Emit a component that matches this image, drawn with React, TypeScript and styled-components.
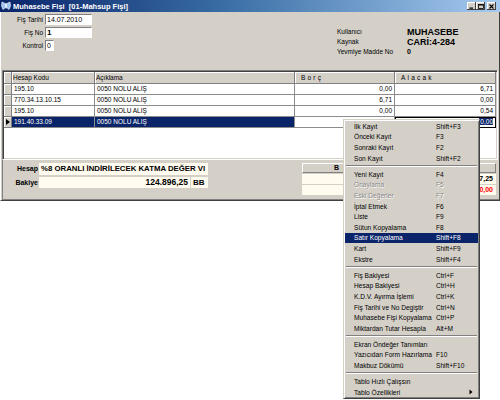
import styled, { createGlobalStyle } from "styled-components";

const GlobalStyle = createGlobalStyle`
  html, body {
    margin: 0;
    padding: 0;
    background: #fff;
  }
  body {
    width: 500px;
    height: 400px;
    overflow: hidden;
    font-family: "Liberation Sans", Arial, sans-serif;
  }
`;

const Page = styled.div`
  position: relative;
  width: 500px;
  height: 400px;
  background: #fff;
  overflow: hidden;
`;

const Window = styled.div`
  width: 500px;
  display: flex;
  flex-direction: column;
  background: #d4d0c8;
`;

const TitleBar = styled.div`
  display: flex;
  align-items: center;
  height: 12px;
  padding: 0 4px 0 1px;
  gap: 2px;
  background: linear-gradient(to right, #0a246a 0%, #3a6ea5 45%, #a6caf0 100%);
`;

const TitleText = styled.span`
  color: #fff;
  font-weight: bold;
  font-size: 7.5px;
  white-space: pre;
`;

const CaptionButtons = styled.div`
  display: flex;
  margin-left: auto;
`;

const CaptionButton = styled.div<{ $gap?: boolean }>`
  width: 9px;
  height: 8px;
  margin-left: ${({ $gap }) => ($gap ? "2px" : "0")};
  box-sizing: border-box;
  background: #d4d0c8;
  box-shadow: inset -1px -1px 0 #404040, inset 1px 1px 0 #fff;
  display: flex;
  align-items: center;
  justify-content: center;
`;

const Body = styled.div`
  display: flex;
  flex-direction: column;
  border-left: 1px solid #fff;
  border-right: 1px solid #404040;
  border-bottom: 1px solid #404040;
`;

const FormArea = styled.div`
  display: flex;
  height: 56px;
`;

const FieldGrid = styled.div`
  width: 335px;
  display: grid;
  grid-template-columns: 42px auto;
  grid-auto-rows: 13px;
  column-gap: 2px;
  align-content: start;
  padding-top: 2px;
  box-sizing: border-box;
`;

const FieldLabel = styled.span`
  font-size: 6.5px;
  text-align: right;
  line-height: 11px;
  color: #000;
`;

const TextBox = styled.div<{ $width: number; $bold?: boolean }>`
  width: ${({ $width }) => $width}px;
  height: 11px;
  box-sizing: border-box;
  background: #fff;
  border-top: 1px solid #808080;
  border-left: 1px solid #808080;
  border-bottom: 1px solid #fff;
  border-right: 1px solid #fff;
  padding-left: 1px;
  font-size: ${({ $bold }) => ($bold ? "8px" : "7px")};
  font-weight: ${({ $bold }) => ($bold ? "bold" : "normal")};
  line-height: 9px;
`;

const InfoGrid = styled.div`
  display: grid;
  grid-template-columns: 70px auto;
  grid-auto-rows: 10px;
  align-content: start;
  padding-top: 15px;
  padding-left: 1px;
`;

const InfoLabel = styled.span`
  font-size: 6.5px;
  line-height: 10px;
`;

const InfoValue = styled.span<{ $small?: boolean }>`
  font-size: ${({ $small }) => ($small ? "7px" : "9px")};
  font-weight: bold;
  line-height: 10px;
  color: #000;
`;

const GridFrame = styled.div`
  margin: 2px 1px 0 1px;
  height: 90px;
  box-sizing: border-box;
  border: 1px solid;
  border-color: #808080 #fff #fff #808080;
  box-shadow: inset 1px 1px 0 #404040, inset -1px -1px 0 #d4d0c8;
  padding: 1px;
  background: #fff;
`;

const DataGrid = styled.div`
  display: grid;
  grid-template-columns: 8px 83px 200px 100px 1fr;
  grid-template-rows: 12px;
  grid-auto-rows: 11px;
`;

const HeaderCell = styled.div<{ $spaced?: boolean }>`
  box-sizing: border-box;
  background: #d4d0c8;
  border-right: 1px solid #808080;
  border-bottom: 1px solid #808080;
  box-shadow: inset 1px 1px 0 #fff;
  font-size: 6.5px;
  line-height: 11px;
  padding-left: ${({ $spaced }) => ($spaced ? "6px" : "1px")};
  letter-spacing: ${({ $spaced }) => ($spaced ? "2.2px" : "0")};
  white-space: nowrap;
  overflow: hidden;
`;

const IndicatorCell = styled.div`
  box-sizing: border-box;
  background: #d4d0c8;
  border-right: 1px solid #808080;
  border-bottom: 1px solid #808080;
  box-shadow: inset 1px 1px 0 #fff;
  display: flex;
  align-items: center;
  justify-content: center;
`;

const Cell = styled.div<{ $right?: boolean; $selected?: boolean; $editing?: boolean }>`
  box-sizing: border-box;
  border-right: 1px solid #8c8c8c;
  border-bottom: 1px solid #8c8c8c;
  background: ${({ $selected }) => ($selected ? "#0a246a" : "#fff")};
  color: ${({ $selected }) => ($selected ? "#fff" : "#000")};
  outline: ${({ $editing }) => ($editing ? "1px solid #000" : "none")};
  outline-offset: -1px;
  font-size: 6.5px;
  line-height: 10px;
  padding: 0 ${({ $right }) => ($right ? "2px" : "0")} 0 ${({ $right }) => ($right ? "0" : "2px")};
  text-align: ${({ $right }) => ($right ? "right" : "left")};
  white-space: nowrap;
  overflow: hidden;
`;

const SelectedText = styled.span`
  background: #0a246a;
  color: #fff;
  padding: 0 0 0 1px;
`;

const SummaryPanel = styled.div`
  display: flex;
  height: 40px;
  margin-left: 1px;
  box-sizing: border-box;
  border-left: 1px solid #808080;
  border-bottom: 1px solid #808080;
`;

const SummaryFields = styled.div`
  display: grid;
  grid-template-columns: 35px 151px 17px;
  grid-template-rows: 12px 11px;
  column-gap: 1px;
  row-gap: 2px;
  padding-top: 3px;
  align-content: start;
`;

const SummaryLabel = styled.span`
  font-size: 7px;
  font-weight: bold;
  line-height: 12px;
  text-align: right;
`;

const CreamField = styled.div<{ $span?: boolean; $right?: boolean; $size: number }>`
  grid-column: ${({ $span }) => ($span ? "2 / 4" : "auto")};
  background: #fffbef;
  font-size: ${({ $size }) => $size}px;
  font-weight: bold;
  line-height: 11px;
  padding: 0 2px;
  text-align: ${({ $right }) => ($right ? "right" : "left")};
  white-space: nowrap;
`;

const TotalsGrid = styled.div`
  margin: 3px 3px 0 auto;
  width: 194px;
  display: grid;
  grid-template-columns: 78px 1fr;
  grid-template-rows: 10px 10px 10px;
  row-gap: 1px;
  align-content: start;
`;

const TotalsHead = styled.div`
  background: #d4d0c8;
  box-sizing: border-box;
  border: 1px solid;
  border-color: #fff #808080 #808080 #fff;
  font-size: 7px;
  font-weight: bold;
  line-height: 8px;
  padding-left: 31px;
  letter-spacing: 4px;
  white-space: nowrap;
  overflow: hidden;
`;

const TotalsCell = styled.div<{ $red?: boolean }>`
  background: #fffbef;
  color: ${({ $red }) => ($red ? "#ff0000" : "#000")};
  font-size: 7px;
  font-weight: bold;
  line-height: 10px;
  text-align: right;
  padding-right: 3px;
`;

const Menu = styled.div`
  position: absolute;
  left: 343px;
  top: 119px;
  width: 137px;
  box-sizing: border-box;
  background: #d4d0c8;
  border: 1px solid;
  border-color: #d4d0c8 #404040 #404040 #d4d0c8;
  box-shadow: inset 1px 1px 0 #fff, inset -1px -1px 0 #808080;
  padding: 1px;
`;

const MenuRow = styled.div<{ $active?: boolean; $disabled?: boolean }>`
  display: flex;
  align-items: center;
  height: 10.64px;
  padding-left: 9px;
  background: ${({ $active }) => ($active ? "#0a246a" : "transparent")};
  color: ${({ $active, $disabled }) =>
    $active ? "#fff" : $disabled ? "#8a8a8a" : "#000"};
  text-shadow: ${({ $disabled }) => ($disabled ? "0.6px 0.6px 0 #fff" : "none")};
  font-size: 6.6px;
  white-space: nowrap;
`;

const MenuLabel = styled.span`
  width: 82px;
`;

const MenuKey = styled.span`
  flex: 1;
`;

const MenuSeparator = styled.div`
  height: 0;
  margin: 1.68px 1px;
  border-top: 1px solid #808080;
  border-bottom: 1px solid #fff;
`;

type Row = { code: string; desc: string; debit: string; credit: string; current?: boolean };

const rows: Row[] = [
  { code: "195.10", desc: "0050 NOLU ALIŞ", debit: "0,00", credit: "6,71" },
  { code: "770.34.13.10.15", desc: "0050 NOLU ALIŞ", debit: "6,71", credit: "0,00" },
  { code: "195.10", desc: "0050 NOLU ALIŞ", debit: "0,00", credit: "0,54" },
  { code: "191.40.33.09", desc: "0050 NOLU ALIŞ", debit: "", credit: "0,00", current: true },
];

type MenuEntry =
  | { label: string; key?: string; disabled?: boolean; active?: boolean; sub?: boolean }
  | "sep";

const menu: MenuEntry[] = [
  { label: "İlk Kayıt", key: "Shift+F3" },
  { label: "Önceki Kayıt", key: "F3" },
  { label: "Sonraki Kayıt", key: "F2" },
  { label: "Son Kayıt", key: "Shift+F2" },
  "sep",
  { label: "Yeni Kayıt", key: "F4" },
  { label: "Onaylama", key: "F5", disabled: true },
  { label: "Eski Değerler", key: "F7", disabled: true },
  { label: "İptal Etmek", key: "F6" },
  { label: "Liste", key: "F9" },
  { label: "Sütun Kopyalama", key: "F8" },
  { label: "Satır Kopyalama", key: "Shift+F8", active: true },
  { label: "Kart", key: "Shift+F9" },
  { label: "Ekstre", key: "Shift+F4" },
  "sep",
  { label: "Fiş Bakiyesi", key: "Ctrl+F" },
  { label: "Hesap Bakiyesi", key: "Ctrl+H" },
  { label: "K.D.V. Ayırma İşlemi", key: "Ctrl+K" },
  { label: "Fiş Tarihi ve No Degiştir", key: "Ctrl+N" },
  { label: "Muhasebe Fişi Kopyalama", key: "Ctrl+P" },
  { label: "Miktardan Tutar Hesapla", key: "Alt+M" },
  "sep",
  { label: "Ekran Öndeğer Tanımları" },
  { label: "Yazıcıdan Form Hazırlama", key: "F10" },
  { label: "Makbuz Dökümü", key: "Shift+F10" },
  "sep",
  { label: "Tablo Hızlı Çalışsın" },
  { label: "Tablo Özellikleri", sub: true },
];

const AppIcon = () => (
  <svg width="10" height="10" viewBox="0 0 10 10">
    <path d="M5 3 L1 1 L0.5 5 L2 8.5 L5 6 Z" fill="#9cc3f0" stroke="#fff" strokeWidth="0.6" />
    <path d="M5 3 L9 1 L9.5 5 L8 8.5 L5 6 Z" fill="#9cc3f0" stroke="#fff" strokeWidth="0.6" />
    <rect x="4.5" y="2.5" width="1" height="5" fill="#fff" />
  </svg>
);

export default function App() {
  return (
    <Page>
      <GlobalStyle />
      <Window>
        <TitleBar>
          <AppIcon />
          <TitleText>{"Muhasebe Fişi  [01-Mahsup Fişi]"}</TitleText>
          <CaptionButtons>
            <CaptionButton>
              <svg width="5" height="5" viewBox="0 0 5 5">
                <rect x="0.5" y="3.5" width="3.5" height="1.2" fill="#000" />
              </svg>
            </CaptionButton>
            <CaptionButton>
              <svg width="6" height="5" viewBox="0 0 6 5">
                <rect x="0.5" y="0.5" width="5" height="4" fill="none" stroke="#000" strokeWidth="0.8" />
                <rect x="0.5" y="0.5" width="5" height="1" fill="#000" />
              </svg>
            </CaptionButton>
            <CaptionButton $gap>
              <svg width="5" height="5" viewBox="0 0 5 5">
                <path d="M0.5 0.5 L4.5 4.5 M4.5 0.5 L0.5 4.5" stroke="#000" strokeWidth="1.1" />
              </svg>
            </CaptionButton>
          </CaptionButtons>
        </TitleBar>

        <Body>
          <FormArea>
            <FieldGrid>
              <FieldLabel>Fiş Tarihi</FieldLabel>
              <TextBox $width={47}>14.07.2010</TextBox>
              <FieldLabel>Fiş No</FieldLabel>
              <TextBox $width={47} $bold>
                1
              </TextBox>
              <FieldLabel>Kontrol</FieldLabel>
              <TextBox $width={9}>0</TextBox>
            </FieldGrid>
            <InfoGrid>
              <InfoLabel>Kullanıcı</InfoLabel>
              <InfoValue>MUHASEBE</InfoValue>
              <InfoLabel>Kaynak</InfoLabel>
              <InfoValue>CARİ:4-284</InfoValue>
              <InfoLabel>Yevmiye Madde No</InfoLabel>
              <InfoValue $small>0</InfoValue>
            </InfoGrid>
          </FormArea>

          <GridFrame>
            <DataGrid>
              <IndicatorCell />
              <HeaderCell>Hesap Kodu</HeaderCell>
              <HeaderCell>Açıklama</HeaderCell>
              <HeaderCell $spaced>Borç</HeaderCell>
              <HeaderCell $spaced>Alacak</HeaderCell>
              {rows.map((r, i) => (
                <Row key={i} row={r} />
              ))}
            </DataGrid>
          </GridFrame>

          <SummaryPanel>
            <SummaryFields>
              <SummaryLabel>Hesap</SummaryLabel>
              <CreamField $span $size={7.8}>
                %8 ORANLI İNDİRİLECEK KATMA DEĞER VI
              </CreamField>
              <SummaryLabel>Bakiye</SummaryLabel>
              <CreamField $right $size={8.5}>
                124.896,25
              </CreamField>
              <CreamField $size={8}>BB</CreamField>
            </SummaryFields>
            <TotalsGrid>
              <TotalsHead>Borç</TotalsHead>
              <TotalsHead />
              <TotalsCell />
              <TotalsCell>124.907,25</TotalsCell>
              <TotalsCell />
              <TotalsCell $red>0,00</TotalsCell>
            </TotalsGrid>
          </SummaryPanel>
        </Body>
      </Window>

      <Menu>
        {menu.map((m, i) =>
          m === "sep" ? (
            <MenuSeparator key={i} />
          ) : (
            <MenuRow key={i} $active={m.active} $disabled={m.disabled}>
              <MenuLabel>{m.label}</MenuLabel>
              <MenuKey>{m.key}</MenuKey>
              {m.sub && (
                <svg width="6" height="6" viewBox="0 0 6 6" style={{ marginRight: "4px" }}>
                  <path d="M1.5 0.5 L4.5 3 L1.5 5.5 Z" fill="#000" />
                </svg>
              )}
            </MenuRow>
          )
        )}
      </Menu>
    </Page>
  );
}

function Row({ row }: { row: Row }) {
  const sel = !!row.current;
  return (
    <>
      <IndicatorCell>
        {sel && (
          <svg width="4" height="6" viewBox="0 0 4 6">
            <path d="M0 0 L4 3 L0 6 Z" fill="#000" />
          </svg>
        )}
      </IndicatorCell>
      <Cell $selected={sel}>{row.code}</Cell>
      <Cell $selected={sel}>{row.desc}</Cell>
      <Cell $right>{row.debit}</Cell>
      <Cell $right $editing={sel}>
        {sel ? <SelectedText>{row.credit}</SelectedText> : row.credit}
      </Cell>
    </>
  );
}
